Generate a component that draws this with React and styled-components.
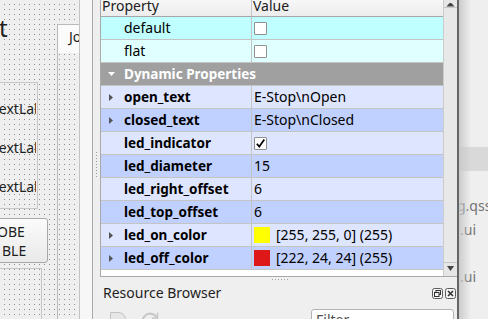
import React from 'react';
import styled, { createGlobalStyle } from 'styled-components';

const Global = createGlobalStyle`
  html, body { margin: 0; padding: 0; }
  body { font-family: "Noto Sans", "Open Sans", "DejaVu Sans", sans-serif; background: #efefef; }
  * { box-sizing: border-box; }
`;

const Root = styled.div`
  display: flex;
  width: 488px;
  height: 319px;
  overflow: hidden;
  background: #efefef;
  color: #1b1b1b;
  font-size: 14px;
`;

/* ---------- designer canvas ---------- */
const Canvas = styled.div`
  flex: 0 0 79px;
  display: flex;
  overflow: hidden;
  background-color: #8e8e8e;
  background-image:
    linear-gradient(to right, #efefef 4px, transparent 4px),
    linear-gradient(to bottom, #efefef 4px, transparent 4px);
  background-size: 5px 5px;
`;

const FormColumn = styled.div`
  flex: 0 0 48px;
  display: flex;
  flex-direction: column;
  min-height: 0;
  overflow: hidden;
  & > * { flex-shrink: 0; }
`;

const FormTitle = styled.div`
  margin-top: 14px;
  margin-left: -1px;
  font-size: 24px;
  line-height: 28px;
  color: #202020;
`;

const GroupBox = styled.div`
  margin-top: 40px;
  width: 38px;
  border: 1px solid #c6c6c6;
  border-left: none;
  padding: 16px 0 11px;
  display: flex;
  flex-direction: column;
  gap: 19px;
`;

const FormLabel = styled.div`
  width: 36px;
  height: 20px;
  line-height: 20px;
  overflow: hidden;
  white-space: nowrap;
  text-indent: -8px;
  color: #1e1e1e;
`;

const PushButton = styled.div`
  margin-top: 9px;
  margin-left: -10px;
  width: 58px;
  height: 45px;
  border: 1px solid #a9a9a9;
  border-radius: 3px;
  background: linear-gradient(#fbfbfb, #e9e9e9);
  padding: 3px 0 2px 10px;
  display: flex;
  flex-direction: column;
  overflow: hidden;
`;

const ButtonLine = styled.span`
  line-height: 19px;
  white-space: nowrap;
  margin-left: ${p => p.$shift}px;
  color: #1e1e1e;
`;

const FormFrame = styled.div`
  margin-top: 5px;
  margin-left: -10px;
  width: 52px;
  height: 60px;
  border: 1px solid #c6c6c6;
`;

const TabWidget = styled.div`
  flex: 1;
  margin-left: 9px;
  margin-top: 24px;
  display: flex;
  flex-direction: column;
  min-width: 0;
`;

const TabButton = styled.div`
  flex: 0 0 29px;
  background: #fbfbfb;
  border-top: 1px solid #b9b9b9;
  border-left: 1px solid #b9b9b9;
  padding: 2px 0 0 11px;
  line-height: 20px;
  white-space: nowrap;
  overflow: hidden;
  color: #1e1e1e;
`;

const TabPane = styled.div`
  flex: 1;
  border-left: 1px solid #b9b9b9;
`;

const Strip = styled.div`
  flex: 0 0 14px;
  background: #f7f7f7;
  border-left: 1px solid #c4c4c4;
  border-right: 1px solid #a9a9a9;
`;

/* ---------- property dock ---------- */
const Dock = styled.div`
  flex: 0 0 364px;
  display: flex;
`;

const HandleColumn = styled.div`
  flex: 0 0 7px;
  padding: 152px 0 0 3px;
`;

const VDots = styled.div`
  width: 1px;
  height: 26px;
  background-image: linear-gradient(to bottom, #9a9a9a 1px, transparent 1px);
  background-size: 1px 3px;
`;

const DockMain = styled.div`
  flex: 0 0 357px;
  display: flex;
  flex-direction: column;
  min-height: 0;
  overflow: hidden;
  & > * { flex-shrink: 0; }
`;

const Frame = styled.div`
  height: 277px;
  display: flex;
  border-left: 1px solid #a9a9a9;
  border-bottom: 1px solid #a9a9a9;
`;

const Table = styled.div`
  flex: 0 0 342px;
  background: #ffffff;
  overflow: hidden;
  display: flex;
  flex-direction: column;
  & > * { flex-shrink: 0; }
`;

const HeaderRow = styled.div`
  display: flex;
  height: 21px;
  margin-top: -4px;
  border-bottom: 1px solid #a8a8a8;
  background: linear-gradient(#fafafa, #ececec);
  line-height: 20px;
  color: #202020;
`;

const HeaderCell = styled.div`
  flex: ${p => (p.$first ? '0 0 151px' : '1')};
  padding-left: 1px;
  border-right: ${p => (p.$first ? '1px solid #c6c6c6' : 'none')};
  white-space: nowrap;
`;

const Row = styled.div`
  display: flex;
  height: 23px;
  border-bottom: 1px solid #c4c4c4;
  background: ${p => p.$bg};
  line-height: 22px;
  color: ${p => p.$fg || '#000'};
`;

const NameCell = styled.div`
  flex: ${p => (p.$span ? '1' : '0 0 151px')};
  display: flex;
  align-items: center;
  padding-left: 7px;
  border-right: ${p => (p.$span ? 'none' : '1px solid #c4c4c4')};
  font-weight: ${p => (p.$bold ? 700 : 400)};
  font-size: ${p => (p.$bold ? '13.5px' : '14px')};
  white-space: nowrap;
  overflow: hidden;
`;

const ArrowSlot = styled.span`
  flex: 0 0 16px;
  display: flex;
  align-items: center;
  padding-left: ${p => p.$pad}px;
`;

const ValueCell = styled.div`
  flex: 1;
  display: flex;
  align-items: center;
  gap: 6px;
  padding-left: 2px;
  white-space: nowrap;
  overflow: hidden;
`;

const CheckBox = styled.span`
  flex: 0 0 13px;
  height: 13px;
  background: #ffffff;
  border: 1px solid #909090;
  border-radius: 1px;
  display: flex;
  align-items: center;
  justify-content: center;
`;

const Swatch = styled.span`
  flex: 0 0 16px;
  height: 16px;
  background: ${p => p.$color};
`;

const ScrollBar = styled.div`
  flex: 0 0 14px;
  display: flex;
  flex-direction: column;
  background: #e6e6e6;
  border-left: 1px solid #cbcbcb;
`;

const ScrollButton = styled.div`
  flex: 0 0 ${p => p.$h}px;
  display: flex;
  justify-content: center;
  align-items: ${p => (p.$top ? 'flex-end' : 'flex-start')};
  border-bottom: ${p => (p.$top ? '1px solid #c6c6c6' : 'none')};
  border-top: ${p => (p.$top ? 'none' : '1px solid #c6c6c6')};
  padding-top: ${p => (p.$top ? 0 : 2)}px;
  overflow: hidden;
`;

const ScrollTrack = styled.div`
  flex: 1;
  background: #e8e8e8;
`;

const HDots = styled.div`
  margin: 2px 0 0 172px;
  width: 18px;
  height: 1px;
  background-image: linear-gradient(to right, #a4a4a4 1px, transparent 1px);
  background-size: 3px 1px;
`;

const DockTitleBar = styled.div`
  height: 27px;
  display: flex;
  align-items: flex-start;
  padding: 2px 1px 0 3px;
`;

const DockTitle = styled.div`
  flex: 1;
  line-height: 20px;
  font-size: 14px;
  color: #1e1e1e;
  padding-top: 1px;
`;

const TitleButtons = styled.div`
  display: flex;
  gap: 2px;
  margin-top: 6px;
`;

const ToolRow = styled.div`
  height: 40px;
  display: flex;
  align-items: flex-start;
  padding: 4px 3px 0 8px;
  gap: 12px;
  & > svg { flex-shrink: 0; }
`;

const FilterBox = styled.div`
  margin-left: auto;
  margin-top: -2px;
  width: 143px;
  height: 24px;
  background: #ffffff;
  border: 1px solid #b3b3b3;
  border-radius: 3px;
  padding-left: 4px;
  line-height: 20px;
  color: #4e4e4e;
`;

/* ---------- window behind ---------- */
const Behind = styled.div`
  flex: 1;
  position: relative;
  display: flex;
  flex-direction: column;
  padding-top: 147px;
  overflow: hidden;
  & > * { flex-shrink: 0; }
  &::after {
    content: '';
    position: absolute;
    inset: 0;
    background: linear-gradient(to right, #666 0, #666 2px, rgba(200,200,200,0.9) 2px, rgba(239,239,239,0) 14px);
    pointer-events: none;
  }
`;

const FileRow = styled.div`
  height: 23.5px;
  line-height: 23.5px;
  padding-left: 3px;
  white-space: nowrap;
  color: #727272;
  background: ${p => (p.$hl ? '#d9d9d9' : 'transparent')};
  text-indent: ${p => p.$indent || 0}px;
`;

const RightArrow = () => (
  <svg width="5" height="7" viewBox="0 0 5 7"><polygon points="0,0 4,3.5 0,7" fill="#555" /></svg>
);
const DownArrow = () => (
  <svg width="7" height="4" viewBox="0 0 7 4"><polygon points="0,0 7,0 3.5,4" fill="#fff" /></svg>
);
const Tick = () => (
  <svg width="11" height="11" viewBox="0 0 11 11">
    <path d="M1.8 5.8 L4.3 8.6 L9.3 1.6" fill="none" stroke="#000" strokeWidth="1.7" />
  </svg>
);

const FloatIcon = () => (
  <svg width="11" height="11" viewBox="0 0 11 11">
    <rect x="0.5" y="0.5" width="10" height="10" rx="2" fill="#f4f4f4" stroke="#5c5c5c" />
    <rect x="4" y="2.5" width="4.5" height="4" fill="none" stroke="#333" />
    <rect x="2.5" y="4.5" width="4.5" height="4" fill="#f4f4f4" stroke="#333" />
  </svg>
);
const CloseIcon = () => (
  <svg width="11" height="11" viewBox="0 0 11 11">
    <rect x="0.5" y="0.5" width="10" height="10" rx="2" fill="#f4f4f4" stroke="#5c5c5c" />
    <path d="M3 3 L8 8 M8 3 L3 8" stroke="#333" strokeWidth="1.6" />
  </svg>
);
const DocIcon = () => (
  <svg width="20" height="20" viewBox="0 0 20 20">
    <path d="M2.5 1.5 H11 Q17.5 2.5 17.5 9 V19 H2.5 Z" fill="#e6e6e6" stroke="#c4c4c4" />
  </svg>
);
const RefreshIcon = () => (
  <svg width="20" height="20" viewBox="0 0 20 20">
    <path d="M16.5 6 A7.5 7.5 0 1 0 17.5 12" fill="none" stroke="#c6c6c6" strokeWidth="2" />
    <path d="M17.5 1.5 V7 H12" fill="none" stroke="#c6c6c6" strokeWidth="1.5" />
  </svg>
);

const L = '#dee6ff';
const D = '#c1d1ff';

const rows = [
  { name: 'default', bg: '#c0ffff', kind: 'check' },
  { name: 'flat', bg: '#e0ffff', kind: 'check' },
  { group: 'Dynamic Properties' },
  { name: 'open_text', bg: L, arrow: true, text: 'E-Stop\\nOpen' },
  { name: 'closed_text', bg: D, arrow: true, text: 'E-Stop\\nClosed' },
  { name: 'led_indicator', bg: L, kind: 'checked' },
  { name: 'led_diameter', bg: D, text: '15' },
  { name: 'led_right_offset', bg: L, text: '6' },
  { name: 'led_top_offset', bg: D, text: '6' },
  { name: 'led_on_color', bg: L, arrow: true, color: '#ffff00', text: '[255, 255, 0] (255)' },
  { name: 'led_off_color', bg: D, arrow: true, color: '#de1818', text: '[222, 24, 24] (255)' },
];

function PropertyRow({ r }) {
  if (r.group) {
    return (
      <Row $bg="#a0a0a0" $fg="#ffffff">
        <NameCell $span $bold>
          <ArrowSlot $pad={0}><DownArrow /></ArrowSlot>
          {r.group}
        </NameCell>
      </Row>
    );
  }
  const bold = !(r.kind === 'check');
  return (
    <Row $bg={r.bg}>
      <NameCell $bold={bold}>
        <ArrowSlot $pad={1}>{r.arrow && <RightArrow />}</ArrowSlot>
        {r.name}
      </NameCell>
      <ValueCell>
        {r.kind === 'check' && <CheckBox />}
        {r.kind === 'checked' && <CheckBox><Tick /></CheckBox>}
        {r.color && <Swatch $color={r.color} />}
        {r.text}
      </ValueCell>
    </Row>
  );
}

export default function App() {
  return (
    <>
      <Global />
      <Root>
        <Canvas>
          <FormColumn>
            <FormTitle>t</FormTitle>
            <GroupBox>
              <FormLabel>TextLabel</FormLabel>
              <FormLabel>TextLabel</FormLabel>
              <FormLabel>TextLabel</FormLabel>
            </GroupBox>
            <PushButton>
              <ButtonLine $shift={-4}>OBE</ButtonLine>
              <ButtonLine $shift={1}>BLE</ButtonLine>
            </PushButton>
            <FormFrame />
          </FormColumn>
          <TabWidget>
            <TabButton>Jo</TabButton>
            <TabPane />
          </TabWidget>
        </Canvas>
        <Strip />
        <Dock>
          <HandleColumn><VDots /></HandleColumn>
          <DockMain>
            <Frame>
              <Table>
                <HeaderRow>
                  <HeaderCell $first>Property</HeaderCell>
                  <HeaderCell>Value</HeaderCell>
                </HeaderRow>
                {rows.map((r, i) => <PropertyRow key={i} r={r} />)}
              </Table>
              <ScrollBar>
                <ScrollButton $top $h={8}>
                  <svg width="9" height="4" viewBox="0 0 9 4"><polygon points="0.5,3.5 8.5,3.5 4.5,-1" fill="#444" /></svg>
                </ScrollButton>
                <ScrollTrack />
                <ScrollButton $h={14}>
                  <svg width="9" height="8" viewBox="0 0 9 8"><polygon points="1,1 8,1 4.5,6" fill="#444" /></svg>
                </ScrollButton>
              </ScrollBar>
            </Frame>
            <HDots />
            <DockTitleBar>
              <DockTitle>Resource Browser</DockTitle>
              <TitleButtons>
                <FloatIcon />
                <CloseIcon />
              </TitleButtons>
            </DockTitleBar>
            <ToolRow>
              <DocIcon />
              <RefreshIcon />
              <FilterBox>Filter</FilterBox>
            </ToolRow>
          </DockMain>
        </Dock>
        <Behind>
          <FileRow $hl />
          <FileRow />
          <FileRow $indent={-3}>g.qss</FileRow>
          <FileRow>.ui</FileRow>
          <FileRow />
          <FileRow>.ui</FileRow>
        </Behind>
      </Root>
    </>
  );
}
